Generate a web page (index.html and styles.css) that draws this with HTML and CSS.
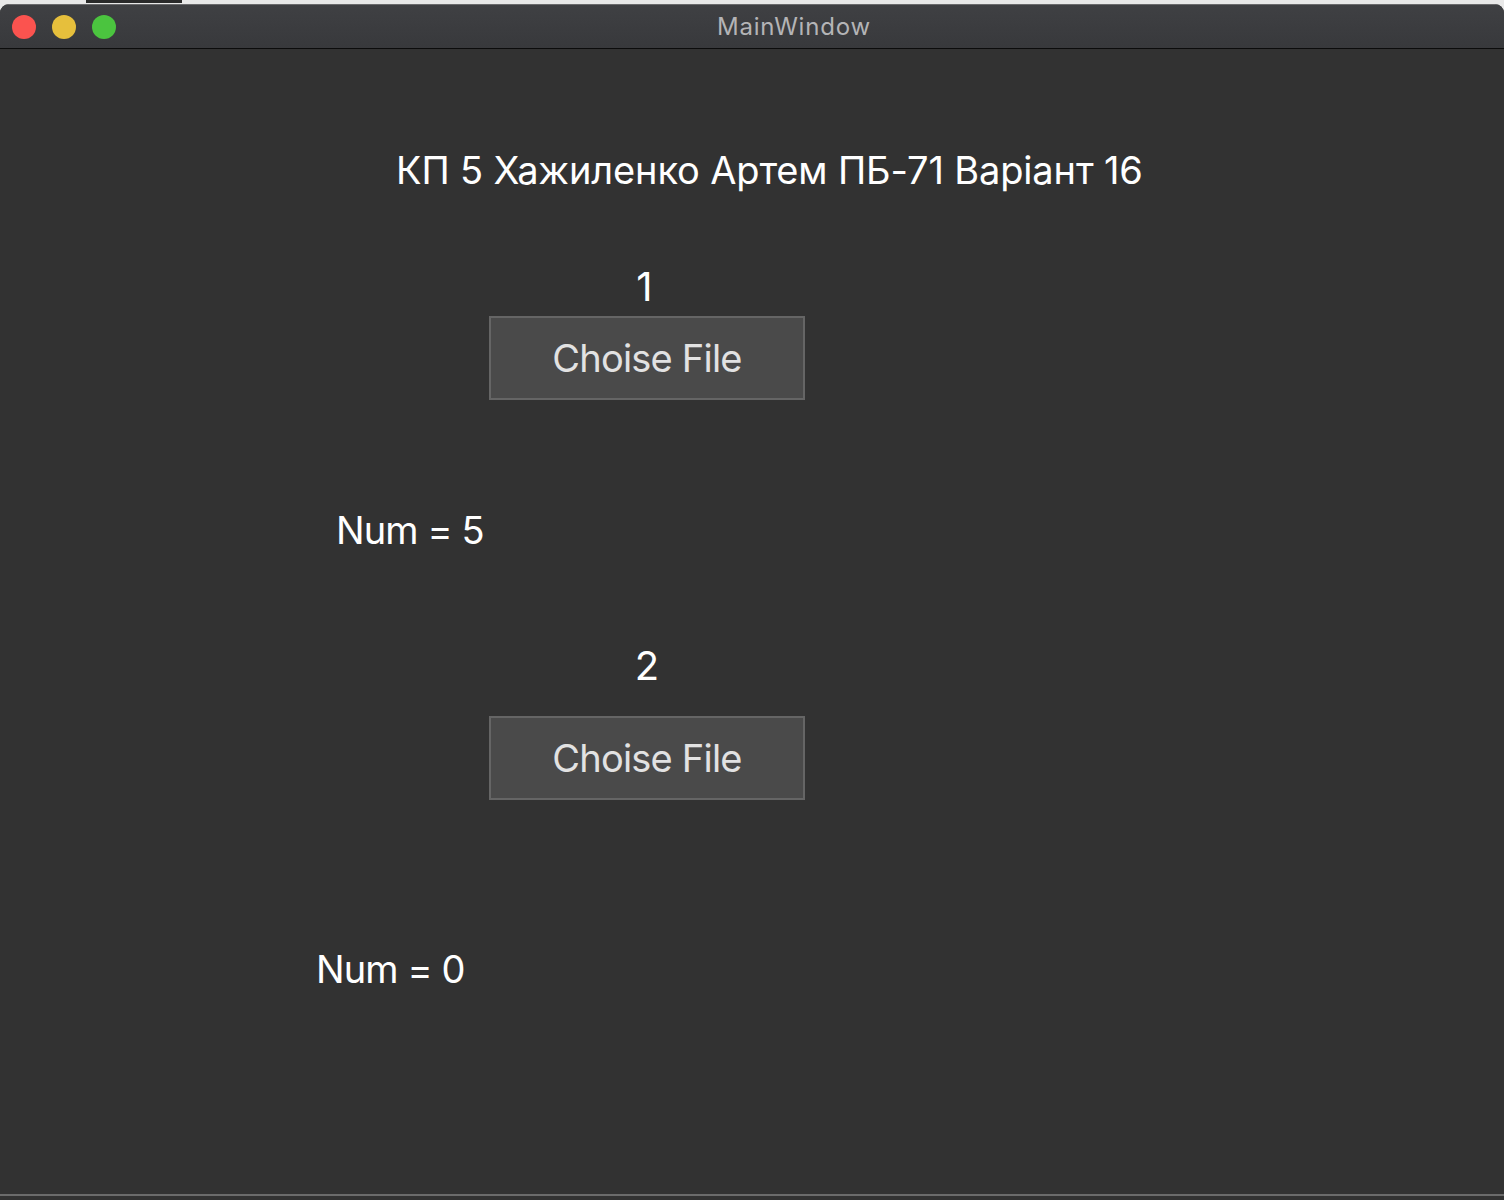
FILE: index.html
```html
<!DOCTYPE html>
<html>
<head>
<meta charset="utf-8">
<link rel="stylesheet" href="styles.css">
</head>
<body>
<div class="topstrip"><div class="tab"></div></div>
<div class="window">
  <div class="titlebar">
    <div class="lights">
      <span class="light red"></span>
      <span class="light yellow"></span>
      <span class="light green"></span>
    </div>
    <div class="title">MainWindow</div>
  </div>
  <div class="content">
    <div class="heading">КП 5 Хажиленко Артем ПБ-71 Варіант 16</div>
    <div class="group g1">
      <div class="label">1</div>
      <button class="btn">Choise File</button>
    </div>
    <div class="num n1">Num = 5</div>
    <div class="group g2">
      <div class="label">2</div>
      <button class="btn">Choise File</button>
    </div>
    <div class="num n2">Num = 0</div>
  </div>
  <div class="bottomline"></div>
</div>
</body>
</html>
```

FILE: styles.css
```css
html, body {
  margin: 0;
  padding: 0;
  background: #e8e8e8;
  width: 1504px;
  height: 1200px;
  overflow: hidden;
  font-family: Inter, "Noto Sans", "Liberation Sans", sans-serif;
}
.topstrip {
  height: 4px;
  position: relative;
}
.tab {
  position: absolute;
  left: 86px;
  top: 0;
  width: 96px;
  height: 3px;
  background: #2a2a2a;
}
.window {
  height: 1196px;
  background: #323232;
  border-radius: 9px 9px 0 0;
  overflow: hidden;
  display: flex;
  flex-direction: column;
}
.titlebar {
  height: 43px;
  flex: none;
  background: linear-gradient(#3f4043, #38393c);
  border-top: 1px solid #6a6a6c;
  border-bottom: 1px solid #0c0c0c;
  display: flex;
  align-items: center;
  position: relative;
}
.lights {
  display: flex;
  gap: 16px;
  margin-left: 12px;
}
.light {
  width: 24px;
  height: 24px;
  border-radius: 50%;
  display: block;
}
.red { background: #fb534f; }
.yellow { background: #e6bf3c; }
.green { background: #4bc43f; }
.title {
  margin-left: 601px;
  color: #b4b4b6;
  font-size: 24px;
  letter-spacing: 0.8px;
}
.content {
  flex: 1;
  display: flex;
  flex-direction: column;
  align-items: flex-start;
  color: #ffffff;
  font-size: 39px;
  line-height: 48px;
}
.heading {
  margin-top: 97px;
  margin-left: 396px;
  font-size: 38px;
  letter-spacing: -0.14px;
}
.group {
  margin-left: 489px;
  width: 316px;
  display: flex;
  flex-direction: column;
  align-items: center;
}
.g1 { margin-top: 69px; }
.g2 { margin-top: 88px; }
.label {
  font-size: 40px;
  height: 53px;
}
.g1 .label { padding-right: 5px; }
.g2 .label { height: 74px; }
.btn {
  width: 316px;
  height: 84px;
  background: #4a4a4a;
  border: 2px solid #656565;
  color: #e2e2e2;
  font-family: inherit;
  font-size: 38px;
  padding: 0;
  letter-spacing: -0.8px;
}
.num {
  font-size: 38px;
  letter-spacing: -0.9px;
}
.n1 { margin-top: 106px; margin-left: 336px; }
.n2 { margin-top: 145px; margin-left: 316px; }
.bottomline {
  flex: none;
  height: 2px;
  background: #6b6b6b;
  margin-top: auto;
  margin-bottom: 4px;
}
```
